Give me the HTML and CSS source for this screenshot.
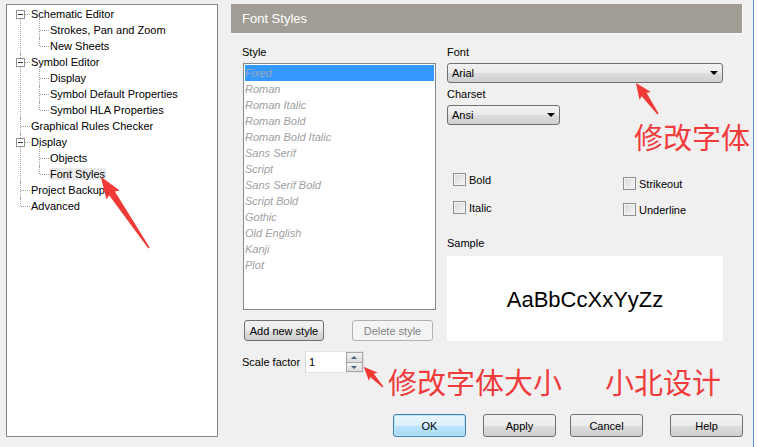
FILE: index.html
```html
<!DOCTYPE html>
<html lang="en">
<head>
  <meta charset="UTF-8" />
  <title>Font Styles</title>
  <link rel="stylesheet" href="styles.css">
</head>
<body>

<div class="window">
  <!-- Tree -->
  <div class="tree">
    <ul class="tree-root">
      <li><span class="exp"></span><span class="txt">Schematic Editor</span>
        <ul class="tree-sub">
          <li><span class="txt">Strokes, Pan and Zoom</span></li>
          <li><span class="txt">New Sheets</span></li>
        </ul>
      </li>
      <li><span class="exp"></span><span class="txt">Symbol Editor</span>
        <ul class="tree-sub">
          <li><span class="txt">Display</span></li>
          <li><span class="txt">Symbol Default Properties</span></li>
          <li><span class="txt">Symbol HLA Properties</span></li>
        </ul>
      </li>
      <li><span class="txt">Graphical Rules Checker</span></li>
      <li><span class="exp"></span><span class="txt">Display</span>
        <ul class="tree-sub">
          <li><span class="txt">Objects</span></li>
          <li><span class="txt sel">Font Styles</span></li>
        </ul>
      </li>
      <li><span class="txt">Project Backup</span></li>
      <li><span class="txt">Advanced</span></li>
    </ul>
  </div>

  <!-- Page -->
  <div class="panel">
    <div class="panel-head">Font Styles</div>

    <div class="panel-body">
      <div class="col">
        <div class="label">Style</div>
        <ul class="listbox">
          <li class="active">Fixed</li>
          <li>Roman</li>
          <li>Roman Italic</li>
          <li>Roman Bold</li>
          <li>Roman Bold Italic</li>
          <li>Sans Serif</li>
          <li>Script</li>
          <li>Sans Serif Bold</li>
          <li>Script Bold</li>
          <li>Gothic</li>
          <li>Old English</li>
          <li>Kanji</li>
          <li>Plot</li>
        </ul>
        <div class="btn-row">
          <button class="btn">Add new style</button>
          <button class="btn disabled">Delete style</button>
        </div>
        <div class="scale">
          <span class="scale-label">Scale factor</span>
          <div class="spin">
            <span class="spin-val">1</span>
            <div class="spin-btns">
              <span class="spin-up"></span>
              <span class="spin-down"></span>
            </div>
          </div>
        </div>
      </div>

      <div class="col">
        <div class="label">Font</div>
        <div class="combo wide">Arial<span class="caret"></span></div>
        <div class="label">Charset</div>
        <div class="combo narrow">Ansi<span class="caret"></span></div>

        <div class="checks">
          <div class="check-col first">
            <label class="check"><span class="box"></span>Bold</label>
            <label class="check"><span class="box"></span>Italic</label>
          </div>
          <div class="check-col second">
            <label class="check"><span class="box"></span>Strikeout</label>
            <label class="check"><span class="box"></span>Underline</label>
          </div>
        </div>

        <div class="label sample-label">Sample</div>
        <div class="sample">AaBbCcXxYyZz</div>
      </div>
    </div>

    <div class="footer">
      <button class="btn big default">OK</button>
      <button class="btn big apply">Apply</button>
      <button class="btn big cancel">Cancel</button>
      <button class="btn big help">Help</button>
    </div>
  </div>
</div>

<!-- annotations -->
<div class="note note-font">修改字体</div>
<div class="note note-size">修改字体大小</div>
<div class="note note-sign">小北设计</div>

<svg class="marks" viewBox="0 0 757 447" width="757" height="447">
  <polygon transform="translate(149 248) rotate(-124.1)" points="0,-0.8 66,-3.5 64,-8 86,0 64,8 66,3.5 0,0.8" />
  <polygon transform="translate(658 114) rotate(-125.4)" points="0,-0.7 24,-3 22,-7 38,0 22,7 24,3 0,0.7" />
  <polygon transform="translate(383 387) rotate(-133.5)" points="0,-0.6 16,-2.5 14,-6 28,0 14,6 16,2.5 0,0.6" />
</svg>

</body>
</html>
```

FILE: styles.css
```css
body {
  margin: 0;
  width: 757px;
  height: 447px;
  overflow: hidden;
  position: relative;
  background: #fff;
  font-family: "Liberation Sans", Arial, sans-serif;
  font-size: 11px;
  color: #000;
}

.window {
  display: flex;
  box-sizing: border-box;
  width: 754px;
  height: 447px;
  padding: 4px 0 0 6px;
  background: #f0f0f0;
  border-right: 1px solid #5b8fc9;
}

/* tree */
.tree {
  width: 212px;
  height: 433px;
  box-sizing: border-box;
  border: 1px solid #828790;
  background: #fff;
}

.tree ul {
  list-style: none;
  margin: 0;
  padding: 0;
}

.tree-root {
  padding-top: 1px !important;
}

.tree li {
  position: relative;
  line-height: 16px;
  white-space: nowrap;
}

.tree-root > li {
  padding-left: 24px;
}

.tree-root > li::before,
.tree-sub > li::before {
  content: "";
  position: absolute;
  top: 0;
  bottom: 0;
  left: 13px;
  border-left: 1px dotted #a0a0a0;
}

.tree-root > li:first-child::before {
  top: 8px;
}

.tree-root > li:last-child::before,
.tree-sub > li:last-child::before {
  bottom: auto;
  height: 8px;
}

.tree-root > li::after,
.tree-sub > li::after {
  content: "";
  position: absolute;
  top: 8px;
  left: 14px;
  width: 9px;
  border-top: 1px dotted #a0a0a0;
}

.tree-sub > li {
  padding-left: 19px;
}

.tree-sub > li::before {
  left: 8px;
}

.tree-sub > li:first-child::before {
  top: -4px;
}

.tree-sub > li::after {
  left: 9px;
  width: 9px;
}

.exp {
  position: absolute;
  left: 9px;
  top: 4px;
  width: 9px;
  height: 9px;
  box-sizing: border-box;
  border: 1px solid #919191;
  background: #fff;
  z-index: 1;
}

.exp::after {
  content: "";
  position: absolute;
  left: 1px;
  top: 3px;
  width: 5px;
  height: 1px;
  background: #333;
}

.sel {
  background: #ebebeb;
  padding: 0 1px;
  margin-left: -1px;
}

/* right page */
.panel {
  margin-left: 13px;
  width: 512px;
  display: flex;
  flex-direction: column;
}

.panel-head {
  height: 30px;
  box-sizing: border-box;
  background: #a19d95;
  color: #fff;
  font-size: 13px;
  padding-left: 11px;
  display: flex;
  align-items: center;
  border-right: 1px solid #fbfbfb;
  border-bottom: 1px solid #fbfbfb;
}

.panel-body {
  display: grid;
  grid-template-columns: 194px 276px;
  column-gap: 11px;
  padding-left: 11px;
  align-items: start;
}

.label {
  margin-top: 11px;
  line-height: 14px;
}

.col .combo + .label {
  margin-top: 4px;
}

.listbox {
  list-style: none;
  margin: 4px 0 0 1px;
  padding: 1px;
  width: 193px;
  height: 247px;
  box-sizing: border-box;
  border: 1px solid #828790;
  background: #fff;
}

.listbox li {
  line-height: 16px;
  font-style: italic;
  color: #a0a0a0;
}

.listbox li.active {
  background: #3399ff;
  color: #9aa6b4;
}

.btn {
  font-family: "Liberation Sans", Arial, sans-serif;
  font-size: 11px;
  color: #000;
  height: 21px;
  padding: 0;
  box-sizing: border-box;
  border: 1px solid #707070;
  border-radius: 3px;
  background: linear-gradient(#f2f2f2 0%, #ebebeb 50%, #dddddd 51%, #cfcfcf 100%);
}

.btn-row {
  display: flex;
  justify-content: space-between;
  width: 189px;
  margin: 10px 0 0 2px;
}

.btn-row .btn {
  width: 80px;
}

.btn-row .btn.disabled {
  width: 81px;
  border-color: #adb2b5;
  background: #f4f4f4;
  color: #838383;
}

.scale {
  display: flex;
  align-items: center;
  margin-top: 10px;
}

.scale-label {
  width: 63px;
}

.spin {
  display: flex;
  width: 59px;
  height: 22px;
  box-sizing: border-box;
  border: 1px solid #e3e3e3;
  border-left-color: #d7d7d7;
  background: #fff;
}

.spin-val {
  flex: 1;
  padding: 4px 0 0 3px;
}

.spin-btns {
  display: flex;
  flex-direction: column;
  width: 17px;
}

.spin-btns span {
  flex: 1;
  position: relative;
  border: 1px solid #a7a7a7;
  background: linear-gradient(#f3f3f3, #dcdcdc);
}

.spin-btns span + span {
  border-top: none;
}

.spin-up::after,
.spin-down::after {
  content: "";
  position: absolute;
  left: 4px;
  top: 3px;
  border-left: 3px solid transparent;
  border-right: 3px solid transparent;
}

.spin-up::after {
  border-bottom: 3px solid #4c607f;
}

.spin-down::after {
  border-top: 3px solid #4c607f;
}

.combo {
  position: relative;
  margin-top: 4px;
  height: 20px;
  box-sizing: border-box;
  border: 1px solid #707070;
  border-radius: 3px;
  background: linear-gradient(#f2f2f2 0%, #ebebeb 50%, #dddddd 51%, #cfcfcf 100%);
  padding-left: 4px;
  line-height: 18px;
}

.combo.wide {
  width: 276px;
}

.combo.narrow {
  width: 113px;
}

.caret {
  position: absolute;
  right: 4px;
  top: 7px;
  border-left: 4px solid transparent;
  border-right: 4px solid transparent;
  border-top: 4px solid #000;
}

.checks {
  display: flex;
  margin-top: 48px;
}

.check-col {
  display: flex;
  flex-direction: column;
}

.check-col.first {
  margin-left: 6px;
  width: 170px;
  gap: 15px;
}

.check-col.second {
  padding-top: 4px;
  gap: 13px;
}

.check {
  display: flex;
  align-items: center;
  gap: 3px;
  height: 13px;
}

.box {
  width: 13px;
  height: 13px;
  box-sizing: border-box;
  border: 1px solid #8e8f8f;
  box-shadow: inset 0 0 0 1px #f4f4f4;
  background: linear-gradient(135deg, #d8d8d8, #f7f7f7);
}

.label.sample-label {
  margin-top: 20px;
}

.sample {
  margin-top: 6px;
  height: 85px;
  background: #fff;
  display: flex;
  align-items: center;
  justify-content: center;
  font-family: "Liberation Sans", Arial, sans-serif;
  font-size: 22px;
  padding-top: 2px;
  box-sizing: border-box;
}

.footer {
  display: flex;
  margin-top: 41px;
  padding-left: 162px;
}

.btn.big {
  width: 73px;
  height: 23px;
}

.btn.default {
  border-color: #3c7fb1;
  background: linear-gradient(#eaf6fd 0%, #d9f0fc 50%, #bee6fd 51%, #a7d9f5 100%);
  box-shadow: inset 0 0 0 1px #bfe3f7;
}

.btn.apply {
  margin-left: 17px;
}

.btn.cancel {
  margin-left: 14px;
}

.btn.help {
  margin-left: 27px;
}

/* annotations over the screenshot */
.note {
  position: absolute;
  font-family: "Noto Sans CJK SC", sans-serif;
  font-size: 29px;
  line-height: 1;
  color: #f23b3b;
  white-space: nowrap;
}

.note-font {
  left: 634px;
  top: 122px;
}

.note-size {
  left: 388px;
  top: 367px;
}

.note-sign {
  left: 605px;
  top: 367px;
}

.marks {
  position: absolute;
  left: 0;
  top: 0;
  pointer-events: none;
}

.marks polygon {
  fill: #f03a36;
}
```
